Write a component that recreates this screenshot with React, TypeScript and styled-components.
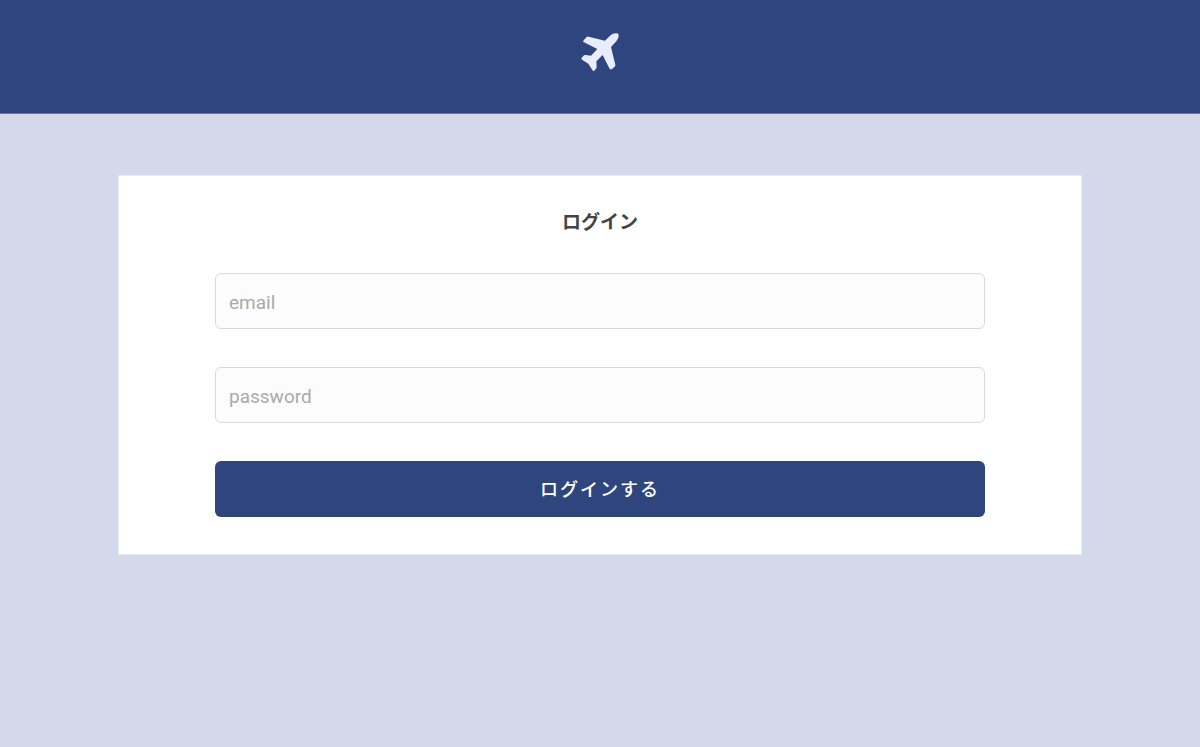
import React from 'react';
import styled, { createGlobalStyle } from 'styled-components';

const GlobalStyle = createGlobalStyle`
  *, *::before, *::after { box-sizing: border-box; }
  body {
    margin: 0;
    background: #d3d8eb;
    color: #444;
    font-family: Roboto, "Noto Sans CJK JP", sans-serif;
  }
`;

const Header = styled.header`
  display: flex;
  justify-content: center;
  height: 114px;
  padding-top: 32px;
  background: #2f457e;
  border-bottom: 1px solid #1f94c8;
`;

const HomeLink = styled.a`
  display: block;
  width: 40px;
  height: 40px;
  color: #e8ecfc;

  svg { display: block; width: 100%; height: 100%; }
`;

const Main = styled.main`
  padding: 61px 118px;
`;

const Card = styled.form`
  display: flex;
  flex-direction: column;
  gap: 38px;
  padding: 35px 96px 37px;
  background: #fff;
  border: 1px solid #e6e9f4;
`;

const Title = styled.h1`
  margin: 0;
  font-size: 19px;
  line-height: 24px;
  font-weight: 700;
  text-align: center;
`;

const Field = styled.input`
  display: block;
  width: 100%;
  height: 56px;
  padding: 2px 13px 0;
  border: 1px solid #d9d9d9;
  border-radius: 6px;
  background: #fcfcfc;
  color: #444;
  font-family: inherit;
  font-size: 19px;

  &::placeholder { color: #aaa; opacity: 1; }
`;

const Submit = styled.button`
  width: 100%;
  height: 56px;
  padding: 0 0 2px;
  border: 0;
  border-radius: 6px;
  background: #2f457e;
  color: #fff;
  font-family: inherit;
  font-size: 18px;
  font-weight: 500;
  letter-spacing: 2px;
  cursor: pointer;
`;

const PlaneIcon = () => (
  <svg viewBox="0 0 120 120" fill="currentColor" aria-hidden="true">
    <path d="M75 26 L90 11 Q99 3 110 4 Q116 4 116 10 Q117 19 109 28 L93 45 L106 98 Q107 101 104 104 L96 111 Q91 114 88 109 L68 69 L49 88 L50 105 Q50 108 48 110 L43 116 Q40 118 37 114 L25 95 L6 83 Q3 80 5 77 L12 70 Q14 68 17 69 L33 71 L52 51 L12 31 Q8 29 10 26 L19 16 Q22 13 26 14 Z" />
  </svg>
);

export default function App() {
  return (
    <>
      <GlobalStyle />
      <Header>
        <HomeLink href="#" aria-label="ホーム"><PlaneIcon /></HomeLink>
      </Header>
      <Main>
        <Card onSubmit={(event: React.FormEvent) => event.preventDefault()}>
          <Title>ログイン</Title>
          <Field type="email" name="email" placeholder="email" aria-label="email" />
          <Field type="password" name="password" placeholder="password" aria-label="password" />
          <Submit type="submit">ログインする</Submit>
        </Card>
      </Main>
    </>
  );
}
